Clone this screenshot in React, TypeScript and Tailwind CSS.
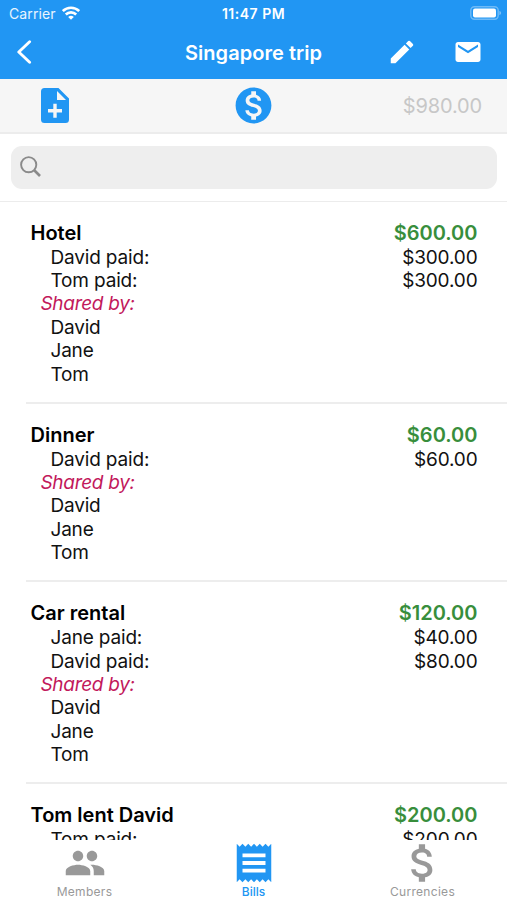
import type { ReactNode } from "react";
import {
  MdAttachMoney,
  MdEdit,
  MdMail,
  MdMonetizationOn,
  MdPeople,
  MdReceipt,
} from "react-icons/md";

type Line = { name: string; amount: string };

type Bill = {
  title: string;
  total: string;
  paid: Line[];
  sharedBy: string[];
};

const bills: Bill[] = [
  {
    title: "Hotel",
    total: "$600.00",
    paid: [
      { name: "David", amount: "$300.00" },
      { name: "Tom", amount: "$300.00" },
    ],
    sharedBy: ["David", "Jane", "Tom"],
  },
  {
    title: "Dinner",
    total: "$60.00",
    paid: [{ name: "David", amount: "$60.00" }],
    sharedBy: ["David", "Jane", "Tom"],
  },
  {
    title: "Car rental",
    total: "$120.00",
    paid: [
      { name: "Jane", amount: "$40.00" },
      { name: "David", amount: "$80.00" },
    ],
    sharedBy: ["David", "Jane", "Tom"],
  },
  {
    title: "Tom lent David",
    total: "$200.00",
    paid: [{ name: "Tom", amount: "$200.00" }],
    sharedBy: [],
  },
];

function StatusBar() {
  return (
    <div className="grid h-[27px] grid-cols-[1fr_auto_1fr] items-center pr-[5px] pl-[9px] text-[14px]">
      <div className="flex items-center gap-1.5">
        <span className="tracking-[0.1px] text-white/90">Carrier</span>
        <svg viewBox="0 0 18 14" className="-mt-0.5 h-[14px] w-[18px]" fill="none" stroke="currentColor" strokeWidth="2.6">
          <path d="M0.8 5.1a11.6 11.6 0 0 1 16.4 0" />
          <path d="M3.8 8.5a7.4 7.4 0 0 1 10.4 0" />
          <path d="M9 13.8 6.2 11a4 4 0 0 1 5.6 0z" fill="currentColor" stroke="none" />
        </svg>
      </div>
      <span className="pr-1 text-center text-[14px] font-semibold tracking-[0.5px]">11:47 PM</span>
      <svg viewBox="0 0 32 14" className="-mt-px h-[14px] w-[32px] justify-self-end">
        <rect x="0.8" y="0.8" width="27.4" height="12.4" rx="3.6" fill="none" stroke="#fff" strokeOpacity="0.35" strokeWidth="1.4" />
        <rect x="3" y="2.6" width="23" height="8.8" rx="2" fill="#fff" />
        <path d="M29.4 5v4c1.1-.3 1.7-1.1 1.7-2s-.6-1.7-1.7-2z" fill="#fff" fillOpacity="0.4" />
      </svg>
    </div>
  );
}

function NavBar() {
  return (
    <div className="grid h-[52px] grid-cols-[1fr_auto_1fr] items-center pb-0.5">
      <svg viewBox="0 0 16 24" className="ml-4 h-6 w-4" fill="none" stroke="currentColor" strokeWidth="2.9">
        <path d="M13.6 1.8 2.8 12l10.8 10.2" strokeLinecap="round" strokeLinejoin="round" />
      </svg>
      <h1 className="pt-px text-[20px] font-semibold tracking-[0.05px]">Singapore trip</h1>
      <div className="flex items-center justify-end gap-[36px] pr-6">
        <MdEdit className="size-[30px]" />
        <MdMail className="size-[30px]" />
      </div>
    </div>
  );
}

function Toolbar() {
  return (
    <div className="grid h-[55px] grid-cols-[1fr_auto_1fr] items-center border-b-2 border-[#ececec] bg-[#f6f6f6] px-[25px] text-[#2196f3]">
      <svg viewBox="0 0 28 35" className="ml-4 h-[35px] w-7">
        <path
          d="M3.5 0H17.5L28 10.5V31.5A3.5 3.5 0 0 1 24.5 35H3.5A3.5 3.5 0 0 1 0 31.5V3.5A3.5 3.5 0 0 1 3.5 0z"
          fill="currentColor"
        />
        <path d="M16 3v9h9z" fill="#f6f6f6" />
        <path d="M14 15.8v14M7 22.8h14" stroke="#f6f6f6" strokeWidth="3.4" />
      </svg>
      <MdMonetizationOn className="size-[43px]" />
      <span className="justify-self-end pt-px text-[20px] tracking-[-0.15px] text-[#c7c7c7]">$980.00</span>
    </div>
  );
}

function SearchField() {
  return (
    <div className="border-b border-[#ececec] pt-[11.5px] pr-2.5 pb-[12.5px] pl-[10.5px]">
      <div className="flex h-[43px] items-center rounded-[11px] bg-[#eee] pl-[9.5px]">
        <svg viewBox="0 0 22 22" className="size-[22px]" fill="none" stroke="#8a8a8a">
          <circle cx="8.7" cy="8.7" r="7.6" strokeWidth="1.9" />
          <path d="m14 14 6 6" strokeWidth="2.6" />
        </svg>
      </div>
    </div>
  );
}

function BillRow({ bill }: { bill: Bill }) {
  return (
    <li className="ml-[26px] border-b-2 border-[#ededed] pt-[19px] pr-[29.5px] pb-4 pl-[4.5px] text-[19px] leading-[23.35px] text-[#111]">
      <div className="flex justify-between text-[20px] leading-[24.8px] font-semibold">
        <span className="text-black">{bill.title}</span>
        <span className="text-[#388e3c]">{bill.total}</span>
      </div>
      {bill.paid.map((line) => (
        <div key={line.name} className="flex justify-between pl-5">
          <span className="tracking-[-0.17px]">{line.name} paid:</span>
          <span className="tracking-[-0.15px]">{line.amount}</span>
        </div>
      ))}
      {bill.sharedBy.length > 0 && (
        <p className="pl-2.5 tracking-[-0.3px] text-[#c2185b] italic">Shared by:</p>
      )}
      {bill.sharedBy.map((name) => (
        <p key={name} className="pl-5 tracking-[-0.2px]">
          {name}
        </p>
      ))}
    </li>
  );
}

function Tab({ label, active, children }: { label: string; active?: boolean; children: ReactNode }) {
  return (
    <div className={`flex flex-col items-center ${active ? "text-[#2196f3]" : "text-[#999]"}`}>
      <div className="flex h-[45px] items-center justify-center">{children}</div>
      <span className={`text-[12px] leading-[13px] ${active ? "font-medium" : "tracking-[0.3px]"}`}>{label}</span>
    </div>
  );
}

export default function App() {
  return (
    <div className="flex h-[900px] w-[507px] flex-col overflow-hidden bg-white font-[Inter,sans-serif]">
      <header className="h-[79px] shrink-0 bg-[#2196f3] text-white">
        <StatusBar />
        <NavBar />
      </header>
      <Toolbar />
      <SearchField />
      <ul className="min-h-0 flex-1 overflow-hidden">
        {bills.map((bill) => (
          <BillRow key={bill.title} bill={bill} />
        ))}
      </ul>
      <nav className="grid h-[60px] shrink-0 grid-cols-3 bg-white">
        <Tab label="Members">
          <MdPeople className="mt-px size-[42px]" />
        </Tab>
        <Tab label="Bills" active>
          <MdReceipt className="mt-px size-[46px]" />
        </Tab>
        <Tab label="Currencies">
          <MdAttachMoney className="mt-px size-[50px]" />
        </Tab>
      </nav>
    </div>
  );
}
